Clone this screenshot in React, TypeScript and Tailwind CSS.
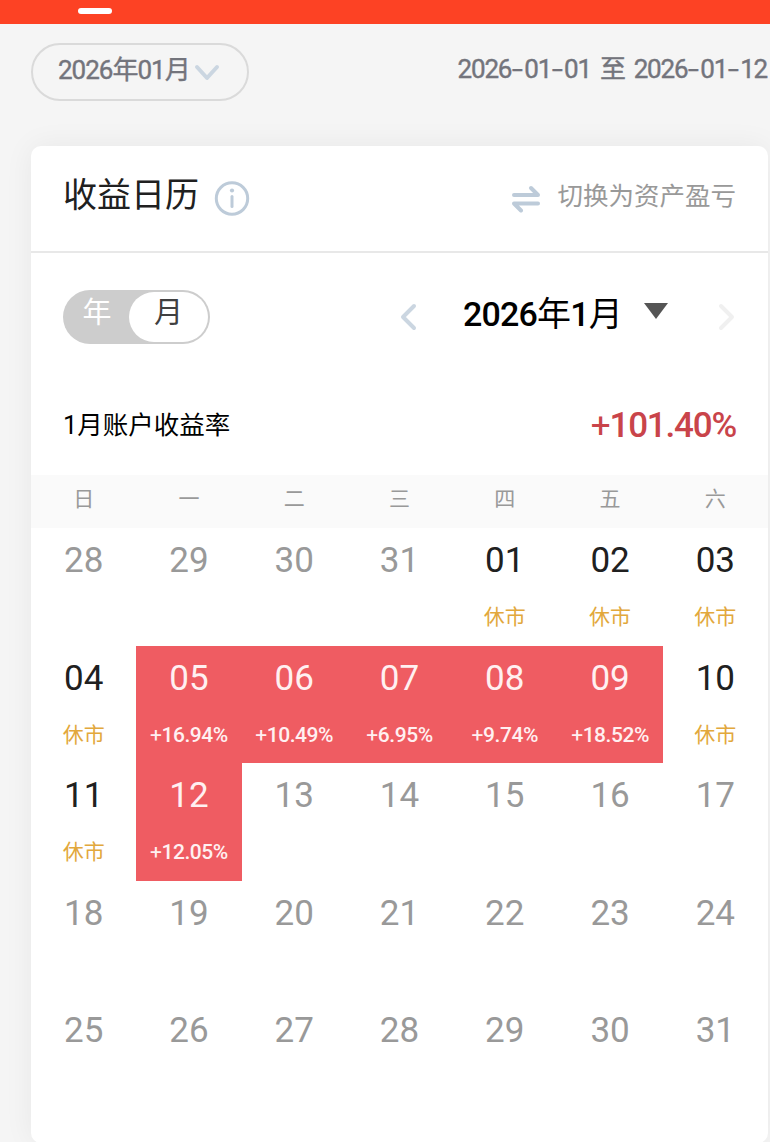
import React from 'react';
import { clsx } from 'clsx';

interface Day {
  label: string;
  rate?: string;
  closed?: boolean;
  muted?: boolean;
}

const WEEKDAYS = ['日', '一', '二', '三', '四', '五', '六'];

const RATES: Record<number, string> = {
  5: '+16.94%',
  6: '+10.49%',
  7: '+6.95%',
  8: '+9.74%',
  9: '+18.52%',
  12: '+12.05%',
};

const CLOSED = [1, 2, 3, 4, 10, 11];
const TODAY = 12;

const days: Day[] = [
  ...[28, 29, 30, 31].map((d) => ({ label: String(d), muted: true })),
  ...Array.from({ length: 31 }, (_, i) => ({
    label: String(i + 1).padStart(2, '0'),
    rate: RATES[i + 1],
    closed: CLOSED.includes(i + 1),
    muted: i + 1 > TODAY,
  })),
];

const DateText: React.FC<{ value: string }> = ({ value }) => (
  <span>
    {value.split('-').map((part, i) => (
      <React.Fragment key={i}>
        {i > 0 && <span className="inline-block w-[13px] text-center scale-x-150 tracking-normal font-normal">-</span>}
        {part}
      </React.Fragment>
    ))}
  </span>
);

const Rate: React.FC<{ value: string }> = ({ value }) => (
  <>
    <span className="font-normal">{value[0]}</span>
    {value.slice(1)}
  </>
);

const DayCell: React.FC<{ day: Day }> = ({ day }) => (
  <div
    className={clsx(
      'flex flex-col items-center pt-[13px]',
      day.rate && 'bg-[#ef5c62] text-[#fff0f1]',
      !day.rate && (day.muted ? 'text-[#999999]' : 'text-[#202020]'),
    )}
  >
    <span className="text-[35px] leading-[40px]">{day.label}</span>
    {day.rate && (
      <span className="mt-[21px] text-[21px] leading-[30px] font-medium tracking-[-0.45px] whitespace-nowrap">
        <Rate value={day.rate} />
      </span>
    )}
    {day.closed && <span className="mt-[21px] text-[21px] leading-[30px] text-[#e2a83c]">休市</span>}
  </div>
);

const App: React.FC = () => {
  return (
    <div className="w-[770px] h-[1142px] overflow-hidden bg-[#f5f5f5] font-[Roboto,'Noto_Sans_CJK_SC',sans-serif]">
      {/* Tab indicator */}
      <div className="h-[24px] bg-[#fd4224] pt-[8px] pl-[78px]">
        <div className="w-[34px] h-[6px] rounded-[3px] bg-white" />
      </div>

      {/* Date range */}
      <div className="h-[122px] pt-[19px] pl-[31px] flex items-start justify-between text-[#73747c]">
        <button className="w-[218px] h-[58px] pl-[25px] pb-[4px] rounded-full border-2 border-[#dadada] flex items-center text-[26px] tracking-[-1px]">
          <span className="w-[135px] text-left whitespace-nowrap [-webkit-text-stroke:0.4px]">2026年01月</span>
          <svg className="w-[28px] h-[20px] mt-[6px]" viewBox="0 0 28 20" fill="none" stroke="#cbd6e1" strokeWidth="4" strokeLinecap="round" strokeLinejoin="round">
            <path d="M4 4l10 11L24 4" />
          </svg>
        </button>
        <span className="pt-[7px] pr-[3px] text-[26px] leading-[38px] tracking-[-1.2px] whitespace-nowrap [-webkit-text-stroke:0.4px]">
          <DateText value="2026-01-01" />
          <span className="mx-[9px]">至</span>
          <DateText value="2026-01-12" />
        </span>
      </div>

      {/* Card */}
      <div className="ml-[31px] w-[737px] h-[997px] rounded-[10px] bg-white shadow-[0_0_30px_rgba(0,0,0,0.06)]">
        <div className="h-[107px] px-[32px] border-b-2 border-[#e8e8e8] flex items-start justify-between">
          <div className="flex">
            <h1 className="pt-[24px] text-[34px] leading-[50px] text-[#202020]">收益日历</h1>
            <svg className="w-[36px] h-[36px] mt-[34px] ml-[15px]" viewBox="0 0 36 36" fill="none" stroke="#bdcbd9">
              <circle cx="18" cy="18.500" r="15.7" strokeWidth="3" />
              <path d="M18 16.500v10" strokeWidth="3" strokeLinecap="round" />
              <circle cx="18" cy="10.500" r="2.1" fill="#bdcbd9" stroke="none" />
            </svg>
          </div>
          <button className="flex text-[#999999]">
            <svg className="w-[30px] h-[28px] mt-[39px] mr-[16px]" viewBox="0 0 30 28" fill="none" stroke="#bdcbd9" strokeWidth="4" strokeLinecap="round" strokeLinejoin="round">
              <path d="M3 10h24l-7-7" />
              <path d="M27 18.500H3l7 7" />
            </svg>
            <span className="pt-[31px] text-[25.5px] leading-[38px]">切换为资产盈亏</span>
          </button>
        </div>

        {/* Period switch */}
        <div className="h-[129px] pt-[37px] pl-[32px] flex items-start">
          <div className="w-[147px] h-[54px] p-[2px] rounded-full bg-[#cdcdcd] flex text-[29px] leading-[42px]">
            <span className="w-[64px] text-center text-white">年</span>
            <span className="w-[79px] h-[50px] rounded-full bg-white text-center text-[#404040]">月</span>
          </div>
          <svg className="w-[18px] h-[30px] mt-[12px] ml-[189px]" viewBox="0 0 18 30" fill="none" stroke="#cbd6e1" strokeWidth="4" strokeLinecap="round" strokeLinejoin="round">
            <path d="M15 4L4 15l11 11" />
          </svg>
          <span className="w-[158px] ml-[46px] text-[34px] leading-[49px] font-medium text-black tracking-[-0.8px] whitespace-nowrap">
            2026<span className="font-normal">年</span>1<span className="font-normal">月</span>
          </span>
          <svg className="w-[26px] h-[18px] mt-[12px] ml-[22px]" viewBox="0 0 26 18">
            <path d="M1 1h24L13 17z" fill="#555555" />
          </svg>
          <svg className="w-[18px] h-[30px] mt-[12px] ml-[49px]" viewBox="0 0 18 30" fill="none" stroke="#f0f0f0" strokeWidth="4" strokeLinecap="round" strokeLinejoin="round">
            <path d="M3 4l11 11L3 26" />
          </svg>
        </div>

        {/* Month total */}
        <div className="h-[93px] pt-[18px] px-[32px] flex items-start justify-between">
          <span className="text-[25.5px] leading-[50px] text-black">1月账户收益率</span>
          <span className="pt-[1px] text-[35px] leading-[50px] font-medium tracking-[-1.2px] text-[#c9444a]">
            <Rate value="+101.40%" />
          </span>
        </div>

        <div className="h-[53px] grid grid-cols-7 bg-[#fafafa] text-[21px] leading-[48px] text-center text-[#999999]">
          {WEEKDAYS.map((d) => (
            <span key={d}>{d}</span>
          ))}
        </div>
        <div className="grid grid-cols-7 auto-rows-[117.5px]">
          {days.map((day, i) => (
            <DayCell key={i} day={day} />
          ))}
        </div>
      </div>
    </div>
  );
};

export default App;
